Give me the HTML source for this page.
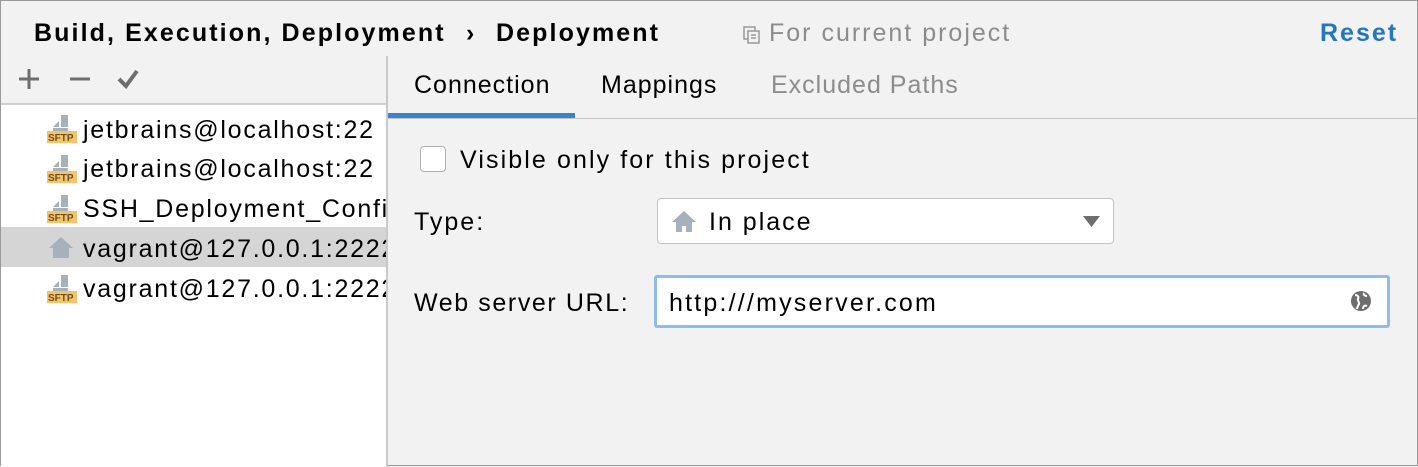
<!DOCTYPE html>
<html><head><style>
*{margin:0;padding:0;box-sizing:border-box}
body{width:1418px;height:466px;background:#f2f2f2;font-family:"Liberation Sans",sans-serif;position:relative;overflow:hidden;color:#000;border:1px solid #9a9a9a}
.a{position:absolute;white-space:nowrap}
.t{font-size:25px;letter-spacing:2px}
.l{letter-spacing:1.75px}
</style></head><body>
<div class="a t" style="left:33px;top:18px;font-weight:bold;letter-spacing:2.1px">Build, Execution, Deployment<span class="a" style="left:432px">›</span><span class="a" style="left:462px">Deployment</span></div>
<svg class="a" style="left:742px;top:25px" width="18" height="18" viewBox="0 0 18 18"><rect x="1" y="1" width="11" height="12" fill="none" stroke="#999" stroke-width="1.5"/><rect x="5" y="5" width="11" height="12" fill="#f2f2f2" stroke="#999" stroke-width="1.5"/><path d="M8 9h5M8 12h5" stroke="#999" stroke-width="1.5"/></svg>
<div class="a t" style="left:768px;top:18px;color:#8c8c8c">For current project</div>
<div class="a t" style="left:1319px;top:18px;color:#2675bf;font-weight:bold">Reset</div>
<div class="a" style="left:0;top:55px;width:387px;height:411px;border-right:2px solid #c9c9c9;overflow:hidden">
  <div class="a" style="left:0;top:47px;width:385px;height:2px;background:#d0d0d0"></div>
  <div class="a" style="left:0;top:49px;width:385px;height:362px;background:#fff"></div>
  <svg class="a" style="left:14px;top:11px" width="130" height="26" viewBox="0 0 130 26"><path d="M4 12h20M14 2v20" stroke="#6e6e6e" stroke-width="3"/><path d="M55 12h20" stroke="#6e6e6e" stroke-width="3"/><path d="M104 12l7 7 11-15" stroke="#6e6e6e" stroke-width="4" fill="none"/></svg>
  <div class="a" style="left:0;top:171px;width:385px;height:40px;background:#d5d5d5"></div>
  <div class="a t l" style="left:82px;top:60px">jetbrains@localhost:22</div>
  <div class="a t l" style="left:82px;top:99px">jetbrains@localhost:22</div>
  <div class="a t l" style="left:82px;top:139px">SSH_Deployment_Confi</div>
  <div class="a t l" style="left:82px;top:179px">vagrant@127.0.0.1:2222</div>
  <div class="a t l" style="left:82px;top:219px">vagrant@127.0.0.1:2222</div>
  <svg class="a" style="left:46px;top:57px" width="30" height="30" viewBox="0 0 30 30"><path d="M6 14L12 8v6zM14 2h7v12h-7z M6 15h15v3H6z" fill="#a7b1bb"/><rect x="0" y="18" width="30" height="12" fill="#f5c36b"/><text x="1" y="28" font-size="10" font-weight="bold" font-family="Liberation Sans" fill="#6b5020">SFTP</text></svg>
  <svg class="a" style="left:46px;top:97px" width="30" height="30" viewBox="0 0 30 30"><path d="M6 14L12 8v6zM14 2h7v12h-7z M6 15h15v3H6z" fill="#a7b1bb"/><rect x="0" y="18" width="30" height="12" fill="#f5c36b"/><text x="1" y="28" font-size="10" font-weight="bold" font-family="Liberation Sans" fill="#6b5020">SFTP</text></svg>
  <svg class="a" style="left:46px;top:137px" width="30" height="30" viewBox="0 0 30 30"><path d="M6 14L12 8v6zM14 2h7v12h-7z M6 15h15v3H6z" fill="#a7b1bb"/><rect x="0" y="18" width="30" height="12" fill="#f5c36b"/><text x="1" y="28" font-size="10" font-weight="bold" font-family="Liberation Sans" fill="#6b5020">SFTP</text></svg>
  <svg class="a" style="left:46px;top:179px" width="28" height="24" viewBox="0 0 26 24"><path d="M13 2L1 13h4v10h16V13h4z" fill="#a7b1bb"/></svg>
  <svg class="a" style="left:46px;top:217px" width="30" height="30" viewBox="0 0 30 30"><path d="M6 14L12 8v6zM14 2h7v12h-7z M6 15h15v3H6z" fill="#a7b1bb"/><rect x="0" y="18" width="30" height="12" fill="#f5c36b"/><text x="1" y="28" font-size="10" font-weight="bold" font-family="Liberation Sans" fill="#6b5020">SFTP</text></svg>
</div>
<div class="a t" style="left:413px;top:70px;letter-spacing:1px">Connection</div>
<div class="a t" style="left:600px;top:70px;letter-spacing:1px">Mappings</div>
<div class="a t" style="left:770px;top:70px;color:#8c8c8c;letter-spacing:1px">Excluded Paths</div>
<div class="a" style="left:387px;top:112px;width:187px;height:5px;background:#3b82cc"></div>
<div class="a" style="left:387px;top:117px;width:1031px;height:1px;background:#c4c4c4"></div>
<div class="a" style="left:419px;top:145px;width:26px;height:26px;background:#fff;border:1px solid #b0b0b0;border-radius:4px"></div>
<div class="a t" style="left:459px;top:145px;letter-spacing:2.1px">Visible only for this project</div>
<div class="a t" style="left:413px;top:207px">Type:</div>
<div class="a" style="left:656px;top:197px;width:457px;height:46px;background:#fff;border:1px solid #c4c4c4;border-radius:4px"></div>
<svg class="a" style="left:670px;top:208px" width="26" height="24" viewBox="0 0 26 24"><path d="M13 2L1 13h4v10h6v-6h4v6h6V13h4z" fill="#a7b1bb"/></svg>
<div class="a t" style="left:708px;top:207px">In place</div>
<svg class="a" style="left:1082px;top:215px" width="18" height="12"><path d="M0 0h17L8.5 11z" fill="#6e6e6e"/></svg>
<div class="a t" style="left:413px;top:288px;letter-spacing:1.6px">Web server URL:</div>
<div class="a" style="left:653px;top:274px;width:736px;height:53px;background:#fff;border:3px solid #8fbcee;border-radius:3px"></div>
<div class="a t" style="left:668px;top:288px;letter-spacing:2.2px">http:///myserver.com</div>
<svg class="a" style="left:1349px;top:289px" width="22" height="22" viewBox="0 0 22 22"><circle cx="11" cy="11" r="10" fill="#6e6e6e"/><path d="M5 5c3 0 4 2 3 4s2 3 1 5-2 3-2 5M14 3c-1 2 1 3 3 3M13 19c0-3 2-4 4-3" stroke="#fff" stroke-width="2" fill="none"/></svg>
</body></html>
